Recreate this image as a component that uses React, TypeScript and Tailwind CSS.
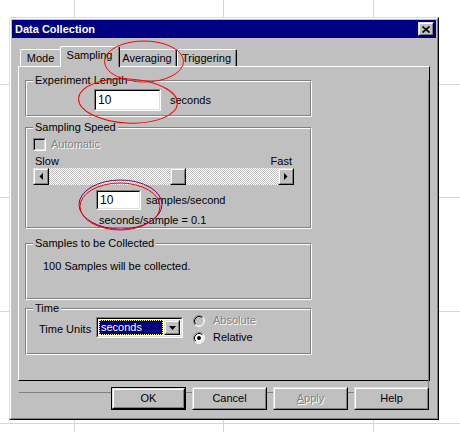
import type { ReactNode } from 'react';

const GRAY = 'bg-[#c0c0c0]';

function Raised({ className = '', children }: { className?: string; children?: ReactNode }) {
  return (
    <div className={`border border-t-[#dfdfdf] border-l-[#dfdfdf] border-r-black border-b-black ${GRAY} ${className}`}>
      <div className="flex h-full w-full items-center justify-center border border-t-white border-l-white border-r-[#808080] border-b-[#808080]">
        {children}
      </div>
    </div>
  );
}

function Sunken({ className = '', inner = 'bg-white', children }: { className?: string; inner?: string; children?: ReactNode }) {
  return (
    <div className={`border border-t-[#808080] border-l-[#808080] border-r-white border-b-white ${className}`}>
      <div className={`flex h-full w-full items-center border border-t-black border-l-black border-r-[#dfdfdf] border-b-[#dfdfdf] ${inner}`}>
        {children}
      </div>
    </div>
  );
}

function GroupBox({ title, className = '', children }: { title: string; className?: string; children?: ReactNode }) {
  return (
    <div className={`relative w-[287px] border border-t-[#808080] border-l-[#808080] border-r-white border-b-white ${className}`}>
      <div className="h-full border border-t-white border-l-white border-r-[#808080] border-b-[#808080]">
        {children}
      </div>
      <span className="absolute -top-[7px] left-[7px] bg-[#c0c0c0] px-[2px] leading-[13px]">{title}</span>
    </div>
  );
}

const disabledText = 'text-[#808080] [text-shadow:1px_1px_0_#fff]';

function Radio({ checked, disabled }: { checked?: boolean; disabled?: boolean }) {
  return (
    <svg width="12" height="12" viewBox="0 0 12 12" className="shrink-0">
      <circle cx="6" cy="6" r="5" fill={disabled ? '#c0c0c0' : '#fff'} />
      <path d="M2.11 9.89 A5.5 5.5 0 0 1 9.89 2.11" fill="none" stroke="#808080" />
      <path d="M9.89 2.11 A5.5 5.5 0 0 1 2.11 9.89" fill="none" stroke="#fff" />
      <path d="M2.82 9.18 A4.5 4.5 0 0 1 9.18 2.82" fill="none" stroke="#000" />
      <path d="M9.18 2.82 A4.5 4.5 0 0 1 2.82 9.18" fill="none" stroke="#dfdfdf" />
      {checked && <circle cx="6" cy="6" r="2" fill="#000" />}
    </svg>
  );
}

function Tab({ label, selected, w }: { label: string; selected?: boolean; w: string }) {
  if (selected) {
    return (
      <div className={`relative z-10 -mx-[2px] -mb-px h-[21px] ${w} rounded-tl-[2px] rounded-tr-[2px] border-t border-l border-r border-t-white border-l-white border-r-black bg-[#c0c0c0]`}>
        <div className="flex h-full items-start justify-center border-r border-r-[#808080] pt-[2px] leading-[13px]">
          {label}
        </div>
      </div>
    );
  }
  return (
    <div className={`h-[17px] ${w} rounded-tl-[2px] rounded-tr-[2px] border-t border-l border-r border-t-white border-l-white border-r-black`}>
      <div className="flex h-full items-center justify-center border-r border-r-[#808080] pt-px leading-[13px]">
        {label}
      </div>
    </div>
  );
}

function Button({ label, isDefault, disabled }: { label: ReactNode; isDefault?: boolean; disabled?: boolean }) {
  const face = (
    <Raised className={isDefault ? 'h-full w-full' : 'h-[23px] w-[75px]'}>
      <span className={disabled ? disabledText : ''}>{label}</span>
    </Raised>
  );
  if (isDefault) return <div className="h-[23px] w-[75px] border border-black">{face}</div>;
  return face;
}

export default function App() {
  return (
    <div className="relative h-[432px] w-[460px] overflow-hidden bg-white pl-[9px] pt-[17px] font-['Liberation_Sans',Arial,sans-serif] text-[11px] leading-[13px] text-black">
      {/* spreadsheet grid behind the dialog */}
      <div className="absolute top-0 bottom-0 left-[74px] w-px bg-[#d6d6d6]" />
      <div className="absolute top-0 bottom-0 left-[223px] w-px bg-[#d6d6d6]" />
      <div className="absolute top-0 bottom-0 left-[373px] w-px bg-[#d6d6d6]" />
      <div className="absolute left-0 right-0 top-[84px] h-px bg-[#d6d6d6]" />
      <div className="absolute left-0 right-0 top-[197px] h-px bg-[#d6d6d6]" />
      <div className="absolute left-0 right-0 top-[311px] h-px bg-[#d6d6d6]" />
      <div className="absolute left-0 right-0 top-[423px] h-px bg-[#d6d6d6]" />

      {/* dialog window */}
      <div className="relative z-10 h-[403px] w-[430px] border border-t-[#dfdfdf] border-l-[#dfdfdf] border-r-black border-b-black bg-[#c0c0c0]">
        <div className="h-full border border-t-white border-l-white border-r-[#808080] border-b-[#808080] p-px">
          <div className="flex h-[18px] items-center justify-between bg-[#000080] pl-[3px] pr-[2px]">
            <span className="font-bold text-white">Data Collection</span>
            <Raised className="h-[14px] w-[16px]">
              <svg width="8" height="7" viewBox="0 0 8 7">
                <path d="M0.5 0.5 L7.5 6.5 M7.5 0.5 L0.5 6.5" stroke="#000" strokeWidth="1.6" />
              </svg>
            </Raised>
          </div>

          <div className="mt-[8px] px-[6px]">
            <div className="flex h-[20px] items-end pl-[2px]">
              <Tab label="Mode" w="w-[42px]" />
              <Tab label="Sampling" w="w-[60px]" selected />
              <Tab label="Averaging" w="w-[59px]" />
              <Tab label="Triggering" w="w-[60px]" />
            </div>

            <div className="h-[315px] border border-t-white border-l-white border-r-black border-b-black">
              <div className="h-full border-r border-b border-r-[#808080] border-b-[#808080] pl-[6px]">
                <GroupBox title="Experiment Length" className="mt-[13px] h-[37px]">
                  <div className="flex items-center pl-[67px] pt-[7px]">
                    <Sunken className="h-[22px] w-[67px]">
                      <span className="pl-[2px] text-[12px]">10</span>
                    </Sunken>
                    <span className="ml-[9px]">seconds</span>
                  </div>
                </GroupBox>

                <GroupBox title="Sampling Speed" className="mt-[10px] h-[102px]">
                  <div className="pl-[6px] pt-[9px]">
                    <div className="flex h-[13px] items-center">
                      <Sunken className="h-[13px] w-[13px]" inner="bg-[#c0c0c0]" />
                      <span className={`ml-[5px] ${disabledText}`}>Automatic</span>
                    </div>
                    <div className="mt-[4px] flex h-[13px] w-[261px] justify-between px-[2px]">
                      <span>Slow</span>
                      <span>Fast</span>
                    </div>
                    <div className="flex h-[17px] w-[261px]">
                      <Raised className="h-[17px] w-[16px]">
                        <svg width="4" height="7" viewBox="0 0 4 7">
                          <path d="M4 0 L0.5 3.5 L4 7 Z" fill="#000" />
                        </svg>
                      </Raised>
                      <div className="flex flex-1 bg-[repeating-conic-gradient(#c0c0c0_0_25%,#ffffff_0_50%)] bg-[length:2px_2px] pl-[121px]">
                        <Raised className="h-[17px] w-[16px]" />
                      </div>
                      <Raised className="h-[17px] w-[16px]">
                        <svg width="4" height="7" viewBox="0 0 4 7">
                          <path d="M0 0 L3.5 3.5 L0 7 Z" fill="#000" />
                        </svg>
                      </Raised>
                    </div>
                    <div className="mt-[5px] flex items-center pl-[63px]">
                      <Sunken className="h-[20px] w-[45px]">
                        <span className="pl-[2px] text-[12px]">10</span>
                      </Sunken>
                      <span className="ml-[5px]">samples/second</span>
                    </div>
                    <div className="mt-[4px] pl-[66px]">seconds/sample = 0.1</div>
                  </div>
                </GroupBox>

                <GroupBox title="Samples to be Collected" className="mt-[14px] h-[57px]">
                  <div className="pl-[16px] pt-[15px]">100 Samples will be collected.</div>
                </GroupBox>

                <GroupBox title="Time" className="mt-[8px] h-[47px]">
                  <div className="flex items-start pl-[12px]">
                    <span className="mt-[13px] w-[57px]">Time Units</span>
                    <Sunken className="mt-[7px] h-[21px] w-[87px]">
                      <div className="ml-px mr-px h-[15px] flex-1 border border-dotted border-[#ffff80] bg-[#000080] pl-px leading-[13px] text-white">
                        seconds
                      </div>
                      <Raised className="mr-px h-[15px] w-[16px]">
                        <svg width="7" height="4" viewBox="0 0 7 4">
                          <path d="M0 0 L7 0 L3.5 4 Z" fill="#000" />
                        </svg>
                      </Raised>
                    </Sunken>
                    <div className="ml-[10px] mt-[4px] flex flex-col gap-[4px]">
                      <div className="flex h-[13px] items-center">
                        <Radio disabled />
                        <span className={`ml-[8px] ${disabledText}`}>Absolute</span>
                      </div>
                      <div className="flex h-[13px] items-center">
                        <Radio checked />
                        <span className="ml-[8px]">Relative</span>
                      </div>
                    </div>
                  </div>
                </GroupBox>
              </div>
            </div>

            <div className="mt-[6px] flex justify-end gap-[6px] pr-px">
              <Button label="OK" isDefault />
              <Button label="Cancel" />
              <Button label={<><u>A</u>pply</>} disabled />
              <Button label="Help" />
            </div>
          </div>
        </div>
      </div>

      {/* hand-drawn red annotations */}
      <svg className="pointer-events-none absolute inset-0 z-20" width="460" height="432" viewBox="0 0 460 432">
        <ellipse cx="144" cy="61.5" rx="39.5" ry="20.5" fill="none" stroke="#ff0000" strokeWidth="1" />
        <ellipse cx="128" cy="101" rx="49.5" ry="22" fill="none" stroke="#ff0000" strokeWidth="1" transform="rotate(3 128 101)" />
        <ellipse cx="120.5" cy="204.5" rx="41.5" ry="24.5" fill="none" stroke="#800060" strokeWidth="1" />
        <ellipse cx="120" cy="206.5" rx="40" ry="23.5" fill="none" stroke="#ff0000" strokeWidth="1" />
      </svg>
    </div>
  );
}
